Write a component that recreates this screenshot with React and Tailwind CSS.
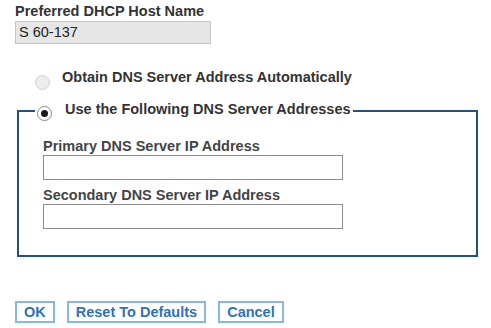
export default function App() {
    return (
        <div className="w-[491px] h-[328px] bg-white pl-[15px] pt-[3px] font-['Liberation_Sans',Arial,sans-serif] text-[14.5px] text-[#333]">

            {/* Host name */}
            <div className="font-bold leading-[16px]">Preferred DHCP Host Name</div>
            <div className="mt-[2px] w-[196px] h-[23px] bg-[#e6e6e6] border border-[#c6c6c6] pl-[3px] leading-[21px] font-normal text-[#222]">
                S 60-137
            </div>

            {/* Automatic DNS */}
            <div className="mt-[25px] flex items-start">
                <span className="mt-[6px] ml-[20px] w-[15px] h-[15px] rounded-full bg-[#ececec] border border-[#d2d2d2]" />
                <span className="ml-[12px] font-bold leading-[16px]">Obtain DNS Server Address Automatically</span>
            </div>

            {/* Manual DNS */}
            <fieldset className="mt-[11px] ml-[2px] w-[461px] border-2 border-[#1f5183]">
                <legend className="ml-[16px] pr-[2px] flex items-start">
                    <span className="mt-[5px] ml-[2px] w-[15px] h-[15px] rounded-full bg-white border border-[#8a8a8a] flex items-center justify-center">
                        <span className="w-[7px] h-[7px] rounded-full bg-[#1a1a1a]" />
                    </span>
                    <span className="ml-[13px] font-bold leading-[16px]">Use the Following DNS Server Addresses</span>
                </legend>

                <div className="pl-[24px] pt-[18px] pb-[26px]">
                    <div className="font-bold leading-[15px] text-[#444]">Primary DNS Server IP Address</div>
                    <div className="mt-[1px] w-[300px] h-[25px] bg-white border border-[#8c8c8c]" />

                    <div className="mt-[8px] font-bold leading-[15px] text-[#444]">Secondary DNS Server IP Address</div>
                    <div className="mt-[1px] w-[300px] h-[25px] bg-white border border-[#8c8c8c]" />
                </div>
            </fieldset>

            {/* Buttons */}
            <div className="mt-[44px] flex gap-[12px] font-bold">
                <button className="h-[22px] px-[7px] border-2 border-[#86b8e4] bg-white text-[#2f72b7] leading-[18px]">OK</button>
                <button className="h-[22px] px-[7px] border-2 border-[#86b8e4] bg-white text-[#2f72b7] leading-[18px]">Reset To Defaults</button>
                <button className="h-[22px] px-[7px] border-2 border-[#86b8e4] bg-white text-[#2f72b7] leading-[18px]">Cancel</button>
            </div>
        </div>
    );
}
